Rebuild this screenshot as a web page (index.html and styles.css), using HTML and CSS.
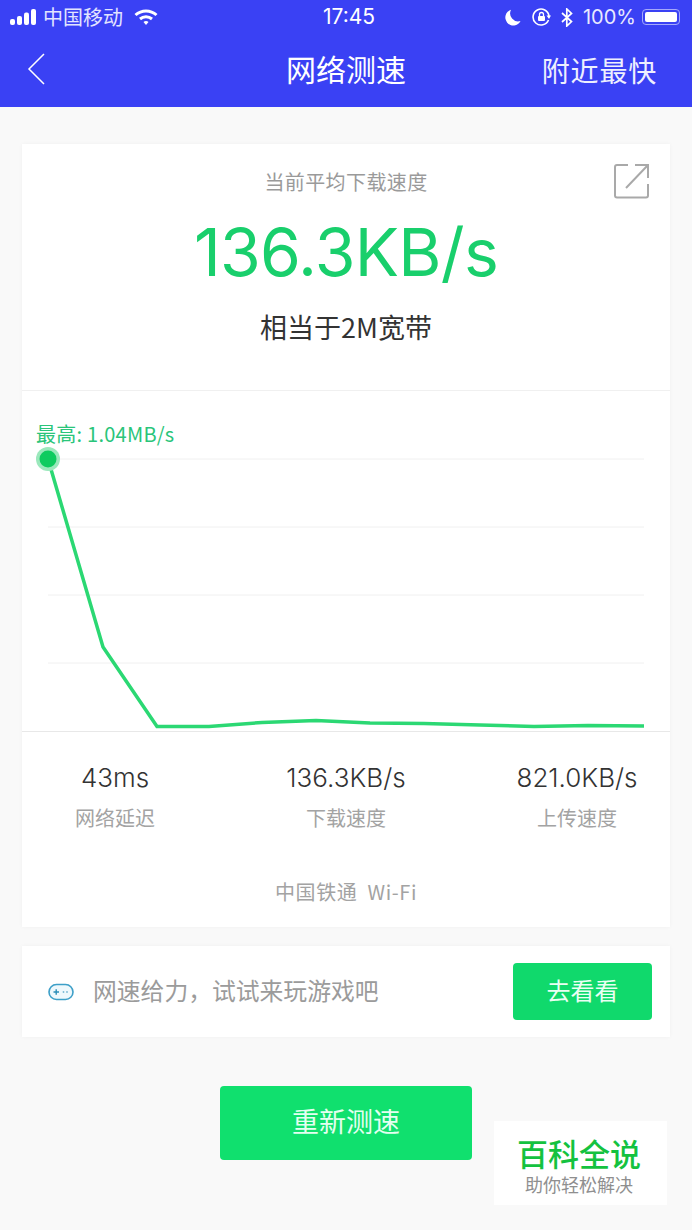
FILE: index.html
```html
<!DOCTYPE html>
<html lang="zh">
<head>
  <meta charset="UTF-8" />
  <meta name="viewport" content="width=device-width, initial-scale=1.0" />
  <title>网络测速</title>
  <link rel="stylesheet" href="styles.css">
</head>
<body>

<div class="topo">
  <div class="status">
    <div class="status-lado">
      <svg class="sinal" width="27" height="16" viewBox="0 0 27 16">
        <rect x="0" y="10" width="5" height="6" rx="2" fill="#fff"/>
        <rect x="7" y="7" width="5" height="9" rx="2" fill="#fff"/>
        <rect x="14" y="3.500" width="5" height="12.500" rx="2" fill="#fff"/>
        <rect x="21" y="0" width="5" height="16" rx="2" fill="#fff"/>
      </svg>
      <span class="operadora">中国移动</span>
      <svg class="wifi" width="24" height="17" viewBox="0 0 24 17">
        <path d="M1.500 6 C7.500 .5 16.500 .5 22.500 6" fill="none" stroke="#fff" stroke-width="3"/>
        <path d="M6 10 C9.500 7 14.500 7 18 10" fill="none" stroke="#fff" stroke-width="3"/>
        <path d="M9.500 13 L12 16 L14.500 13 C13 11.800 11 11.800 9.500 13 Z" fill="#fff"/>
      </svg>
    </div>
    <div class="hora">17:45</div>
    <div class="status-lado direita">
      <svg class="lua" width="16" height="17" viewBox="0 0 16 17">
        <path d="M6 .8 A8 8 0 1 0 15.500 12 A8 8 0 0 1 6 .8 Z" fill="#fff"/>
      </svg>
      <svg class="trava" width="19" height="19" viewBox="0 0 19 19">
        <path d="M16.500 12 A8 8 0 1 1 17 8" fill="none" stroke="#fff" stroke-width="1.600"/>
        <path d="M14.500 7.500 L19 7.500 L17 11 Z" fill="#fff"/>
        <rect x="6" y="8" width="7" height="5" rx="1" fill="#fff"/>
        <path d="M7.500 8 V6.500 A2 2 0 0 1 11.500 6.500 V8" fill="none" stroke="#fff" stroke-width="1.300"/>
      </svg>
      <svg class="bt" width="12" height="19" viewBox="0 0 12 19">
        <path d="M1 5 L10.500 13.500 L5.800 18 V1 L10.500 5.500 L1 14" fill="none" stroke="#fff" stroke-width="1.700"/>
      </svg>
      <span class="pct">100%</span>
      <div class="bateria"><div class="bateria-cheia"></div></div>
    </div>
  </div>
  <div class="navbar">
    <svg class="voltar" width="18" height="32" viewBox="0 0 18 32">
      <path d="M17 1 L2 16 L17 31" fill="none" stroke="#fff" stroke-width="1.500"/>
    </svg>
    <h1>网络测速</h1>
    <a class="nav-link">附近最快</a>
  </div>
</div>

<div class="conteudo">
  <div class="cartao">
    <div class="resumo">
      <svg class="partilhar" width="36" height="36" viewBox="0 0 36 36">
        <path d="M14 2 H3 A2 2 0 0 0 1 4 V32.500 A2 2 0 0 0 3 34.500 H32 A2 2 0 0 0 34 32.500 V21" fill="none" stroke="#a9a9a9" stroke-width="2"/>
        <path d="M21 2 H34 V15 M34 2 L12 25" fill="none" stroke="#a9a9a9" stroke-width="2"/>
      </svg>
      <p class="resumo-titulo">当前平均下载速度</p>
      <p class="resumo-valor">136.3KB/s</p>
      <p class="resumo-nota">相当于2M宽带</p>
    </div>

    <div class="grafico">
      <span class="maximo">最高: 1.04MB/s</span>
      <svg class="grafico-svg" width="648" height="340" viewBox="0 0 648 340">
        <g stroke="#f0f0f0" stroke-width="1">
          <line x1="26" y1="68" x2="622" y2="68"/>
          <line x1="26" y1="136" x2="622" y2="136"/>
          <line x1="26" y1="204" x2="622" y2="204"/>
          <line x1="26" y1="272" x2="622" y2="272"/>
        </g>
        <polyline points="26,68 81,256 135,335.500 187,335.500 240,331.500 294,329.500 348,332 402,332.500 458,334 512,335.500 566,334.500 622,335" fill="none" stroke="#2bd873" stroke-width="3.500"/>
        <circle cx="26" cy="68" r="12" fill="#9be8bc"/>
        <circle cx="26" cy="68" r="8.500" fill="#0ecb5f"/>
      </svg>
    </div>

    <div class="medidas">
      <div class="medida">
        <div class="medida-valor">43ms</div>
        <div class="medida-nome">网络延迟</div>
      </div>
      <div class="medida">
        <div class="medida-valor">136.3KB/s</div>
        <div class="medida-nome">下载速度</div>
      </div>
      <div class="medida">
        <div class="medida-valor">821.0KB/s</div>
        <div class="medida-nome">上传速度</div>
      </div>
    </div>
    <p class="rede">中国铁通&nbsp;&nbsp;Wi-Fi</p>
  </div>

  <div class="cartao jogo">
    <svg class="jogo-icone" width="26" height="18" viewBox="0 0 26 18">
      <rect x="1" y="1.500" width="24" height="15" rx="7.500" fill="#eef8fc" stroke="#3d9fc8" stroke-width="1.600"/>
      <path d="M5.500 9 H11 M8.200 6.200 V11.800" stroke="#2b8db8" stroke-width="1.400"/>
      <circle cx="15.500" cy="9" r=".9" fill="#7ab8d4"/>
      <circle cx="19" cy="9" r=".9" fill="#7ab8d4"/>
    </svg>
    <span class="jogo-texto">网速给力，试试来玩游戏吧</span>
    <button class="btn-ver">去看看</button>
  </div>

  <button class="btn-repetir">重新测速</button>
</div>

<div class="marca">
  <div class="marca-nome">百科全说</div>
  <div class="marca-sub">助你轻松解决</div>
</div>

</body>
</html>
```

FILE: styles.css
```css
body {
  margin: 0;
  font-family: "Noto Sans CJK SC", "Inter", "Liberation Sans", sans-serif;
  background-color: #f9f9f9;
  height: 1230px;
  overflow: hidden;
  position: relative;
}

p {
  margin: 0;
}

.topo {
  height: 107px;
  background-color: #3a41f4;
  color: white;
}

.status {
  height: 34px;
  display: flex;
  align-items: center;
  justify-content: space-between;
  padding: 0 12px 0 10px;
  position: relative;
}

.status-lado {
  display: flex;
  align-items: center;
  gap: 7px;
  font-size: 19px;
}

.operadora {
  color: #e2e4ff;
  font-size: 20px;
  line-height: 28px;
  margin-left: -1px;
  margin-right: 4px;
}

.hora {
  position: absolute;
  left: 323px;
  top: 3px;
  font-family: "Inter", sans-serif;
  font-size: 21px;
  line-height: 28px;
}

.direita {
  gap: 10px;
}

.lua {
  margin-right: 1px;
}

.pct {
  font-family: "Inter", sans-serif;
  font-size: 20px;
  color: #e8e9ff;
  margin-right: -4px;
}

.bateria {
  width: 38px;
  height: 16px;
  border: 1.500px solid #a5a9fb;
  border-radius: 4px;
  padding: 2px;
  box-sizing: border-box;
}

.bateria-cheia {
  background: white;
  height: 100%;
  border-radius: 2px;
}

.navbar {
  height: 73px;
  display: flex;
  align-items: center;
  justify-content: space-between;
  padding: 0 35px 0 27px;
  position: relative;
}

.voltar {
  margin-top: -4px;
}

.navbar h1 {
  position: absolute;
  left: 0;
  right: 0;
  top: 12px;
  margin: 0;
  text-align: center;
  font-size: 30px;
  line-height: 44px;
  font-weight: 400;
  pointer-events: none;
}

.nav-link {
  font-size: 28px;
  letter-spacing: 0.800px;
  margin-top: -1px;
  color: #eeefff;
}

.conteudo {
  padding: 37px 22px 0;
  display: flex;
  flex-direction: column;
  align-items: center;
}

.cartao {
  background: white;
  width: 100%;
  box-shadow: 0 0 4px rgba(0,0,0,0.04);
}

.resumo {
  height: 247px;
  box-sizing: border-box;
  text-align: center;
  padding-top: 23px;
  border-bottom: 1px solid #f0f0f0;
  position: relative;
}

.partilhar {
  position: absolute;
  right: 20px;
  top: 19px;
}

.resumo-titulo {
  font-size: 20px;
  line-height: 30px;
  letter-spacing: 0.400px;
  color: #9a9a9a;
}

.resumo-valor {
  font-family: "Inter", "Liberation Sans", sans-serif;
  font-size: 66px;
  font-weight: 400;
  line-height: 80px;
  margin-top: 15px;
  color: #19cf6c;
  letter-spacing: -0.700px;
}

.resumo-nota {
  font-size: 27px;
  line-height: 38px;
  margin-top: 16px;
  color: #333;
}

.grafico {
  height: 340px;
  position: relative;
  border-bottom: 1px solid #e8e8e8;
}

.grafico-svg {
  display: block;
}

.maximo {
  position: absolute;
  left: 14px;
  top: 28px;
  font-size: 20px;
  line-height: 30px;
  letter-spacing: 0.250px;
  color: #2ac57a;
  white-space: nowrap;
}

.medidas {
  display: grid;
  grid-template-columns: 186px 276px 186px;
  padding-top: 28px;
  text-align: center;
}

.medida-valor {
  font-family: "Inter", "Liberation Sans", sans-serif;
  font-size: 26px;
  font-weight: 300;
  line-height: 36px;
  color: #333;
}

.medida-nome {
  font-size: 20px;
  line-height: 30px;
  margin-top: 7px;
  color: #a3a3a3;
}

.rede {
  text-align: center;
  font-size: 20px;
  line-height: 30px;
  letter-spacing: 0.600px;
  margin-top: 44px;
  padding-bottom: 20px;
  color: #a3a3a3;
}

.jogo {
  margin-top: 19px;
  height: 91px;
  display: flex;
  align-items: center;
  padding: 0 18px 0 26px;
  box-sizing: border-box;
}

.jogo-icone {
  margin-right: 19px;
  flex: none;
}

.jogo-texto {
  flex: 1;
  font-size: 23.800px;
  line-height: 34px;
  padding-bottom: 3px;
  color: #9b9b9b;
}

.btn-ver {
  width: 139px;
  height: 57px;
  background-color: #10d96c;
  color: #eafff3;
  border: none;
  border-radius: 4px;
  padding: 0 0 4px;
  font-family: inherit;
  font-size: 24px;
}

.btn-repetir {
  margin-top: 49px;
  width: 252px;
  height: 74px;
  background-color: #10e06e;
  color: #e3fff0;
  border: none;
  border-radius: 4px;
  padding: 0 0 5px;
  font-family: inherit;
  font-size: 27px;
}

/* marca por cima do botao */
.marca {
  position: absolute;
  left: 494px;
  top: 1121px;
  width: 173px;
  height: 84px;
  background: white;
  text-align: center;
}

.marca-nome {
  font-size: 31px;
  font-weight: 500;
  line-height: 36px;
  margin-top: 14px;
  margin-left: -3px;
  color: #14c23f;
}

.marca-sub {
  font-size: 18px;
  line-height: 24px;
  margin-top: 1px;
  margin-left: -3px;
  color: #8f8f8f;
}
```
